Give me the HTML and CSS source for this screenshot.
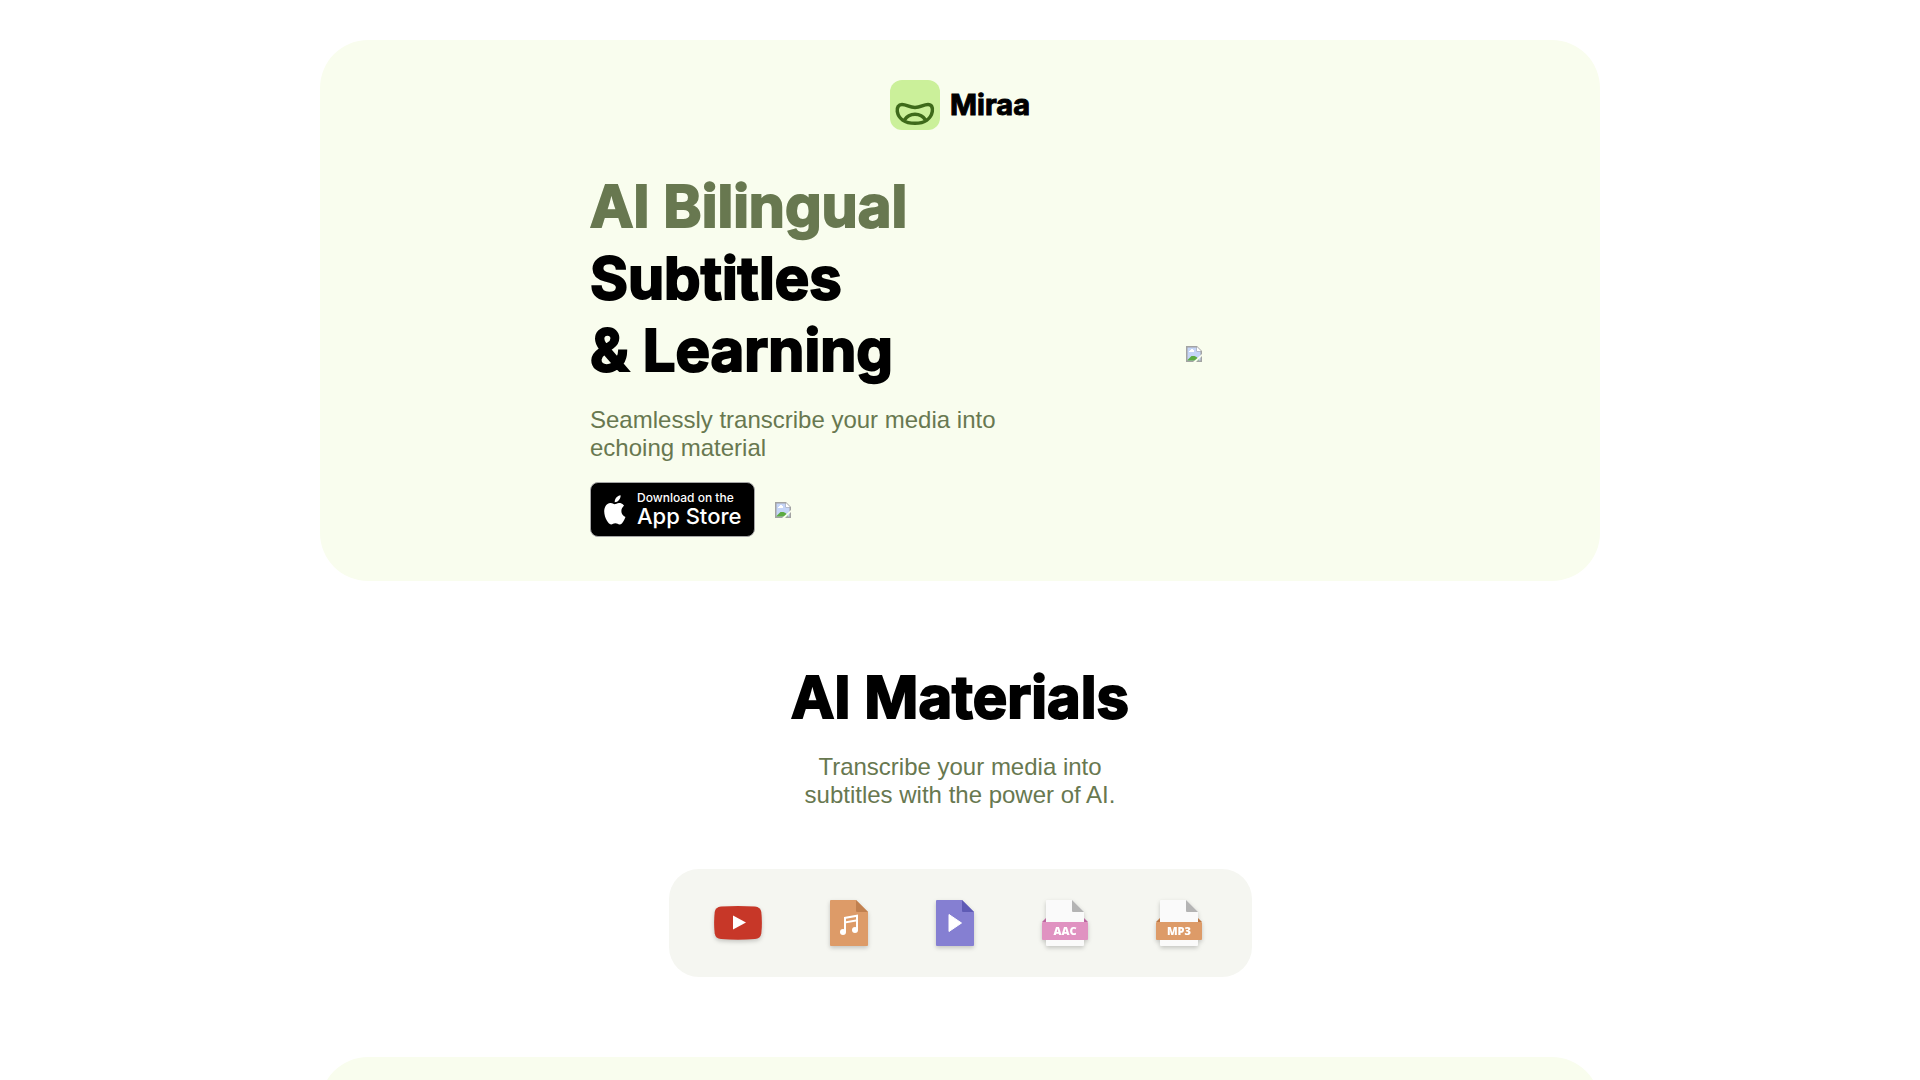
FILE: index.html
```html
<!DOCTYPE html>
<html lang="en">
<head>
<meta charset="utf-8">
<meta name="viewport" content="width=device-width, initial-scale=1">
<title>Miraa</title>
<link rel="stylesheet" href="styles.css">
</head>
<body>
<svg class="defs" aria-hidden="true">
  <symbol id="broken" viewBox="0 0 16 16">
    <path d="M0 0h11l5 5v11H0z" fill="#a3a3a3"/>
    <path d="M1.500 1.500h9v4h4v9h-13z" fill="#c5d5f7"/>
    <path d="M11 1v4h4z" fill="#fff"/>
    <path d="M3 6V5h1V4h1V3h2v1h1v2z" fill="#fff"/>
    <path d="M1.500 14.500V14l4-4h3l2 1 2 2v1.500z" fill="#5cab42"/>
    <path d="M16 8v2l-6 6H7z" fill="#f9fdee"/>
  </symbol>
</svg>
<main class="page">
  <section class="card">
    <header class="brand">
      <svg class="brand-icon" viewBox="0 0 50 50" aria-hidden="true">
        <rect width="50" height="50" rx="12" fill="#cbf09a"/>
        <g fill="none" stroke="#3e6a1a" stroke-width="3.500" stroke-linecap="round" stroke-linejoin="round">
          <path d="M12 24.500C17 24.500 19 27.500 25 27.500C31 27.500 33 24.500 38 24.500C41.500 24.500 43 27.500 42.300 31.500C41 38.500 35 43.300 25 43.300C14.500 43.300 8.500 38.500 7.300 31.500C6.700 27.500 8.500 24.500 12 24.500Z"/>
          <path d="M14.500 40C17 36 20.500 34.300 25 34.300C29.500 34.300 33 36 35.500 40"/>
        </g>
      </svg>
      <span class="brand-name">Miraa</span>
    </header>
    <div class="hero">
      <div>
        <h1 class="title"><span class="accent">AI Bilingual</span><br>Subtitles<br>&amp; Learning</h1>
        <p class="lead">Seamlessly transcribe your media into echoing material</p>
        <div class="actions">
          <a class="store" href="#">
            <svg class="apple" viewBox="1 0 23 30" aria-hidden="true"><path fill="#fff" d="M19.800 15.800c0-2.700 2.200-4 2.300-4.100-1.300-1.900-3.200-2.100-3.900-2.100-1.700-.2-3.200 1-4.100 1s-2.100-1-3.500-.9C8.800 9.700 7.100 10.700 6.200 12.300c-2 3.300-.5 8.300 1.400 11 .9 1.300 2 2.800 3.500 2.800 1.400-.1 1.900-.9 3.600-.9s2.200.9 3.600.9c1.500 0 2.500-1.300 3.400-2.700 1.100-1.500 1.500-3 1.500-3.100-.1 0-3.400-1.200-3.400-4.500z" transform="translate(-4.500 -4.500) scale(1.180 1.300)"/><path fill="#fff" d="M12.200 7.200C12 3.600 14.800.6 18.100.2c.3 3.600-2.700 7-5.900 7z"/></svg>
            <span class="store-text"><small class="store-small">Download on the</small><span class="store-name">App Store</span></span>
          </a>
          <svg class="broken" role="img"><use href="#broken"/></svg>
        </div>
      </div>
      <div class="visual"><svg class="broken" role="img"><use href="#broken"/></svg></div>
    </div>
  </section>

  <section class="materials">
    <h2 class="title">AI Materials</h2>
    <p class="lead">Transcribe your media into<br>subtitles with the power of AI.</p>
    <div class="formats">
      <svg class="icon wide" viewBox="0 0 48 46" aria-hidden="true">
        <path d="M7 6.500Q24 5.500 41 6.500Q46.500 7 47.300 12Q48.500 23 47.300 33.500Q46.500 38.500 41 39Q24 40.500 7 39Q1.500 38.500 .7 33.500Q-.5 23 .7 12Q1.500 7 7 6.500Z" fill="#c73728"/>
        <path d="M19 15.500v14l13-7z" fill="#fff"/>
      </svg>
      <svg class="icon" viewBox="0 0 38 46" aria-hidden="true">
        <path d="M1 0h25l12 12v33q0 1-1 1H1q-1 0-1-1V1q0-1 1-1z" fill="#dd9b68"/>
        <path d="M26 0l12 12H27q-1 0-1-1z" fill="#c1804f"/>
        <g fill="#fff"><circle cx="13" cy="32" r="3"/><circle cx="25" cy="30" r="3"/><path d="M14 17l14-2.500V30h-2v-8.500L16 23.300V32h-2z M16 18.800v2.500l10-1.800V17z" fill-rule="evenodd"/></g>
      </svg>
      <svg class="icon" viewBox="0 0 38 46" aria-hidden="true">
        <path d="M1 0h25l12 12v33q0 1-1 1H1q-1 0-1-1V1q0-1 1-1z" fill="#857fd2"/>
        <path d="M26 0l12 12H27q-1 0-1-1z" fill="#5f5bb5"/>
        <path d="M13 14.500l12.500 8.500L13 31.500z" fill="#fff" stroke="#fff" stroke-linejoin="round"/>
      </svg>
      <svg class="icon band" viewBox="0 0 46 46" aria-label="AAC">
        <path d="M4 18l-4 4h46l-4-4z" fill="#bd67a0"/>
        <path d="M5 0h25l12 12v33q0 1-1 1H5q-1 0-1-1V1q0-1 1-1z" fill="#fafafa"/>
        <path d="M30 0l12 12H31q-1 0-1-1z" fill="#b4b4b4"/>
        <rect y="22" width="46" height="18" rx="1" fill="#e092c1"/>
        <text class="tag" x="23" y="35">AAC</text>
      </svg>
      <svg class="icon band" viewBox="0 0 46 46" aria-label="MP3">
        <path d="M4 18l-4 4h46l-4-4z" fill="#bd7845"/>
        <path d="M5 0h25l12 12v33q0 1-1 1H5q-1 0-1-1V1q0-1 1-1z" fill="#fafafa"/>
        <path d="M30 0l12 12H31q-1 0-1-1z" fill="#b4b4b4"/>
        <rect y="22" width="46" height="18" rx="1" fill="#dd9b68"/>
        <text class="tag" x="23" y="35">MP3</text>
      </svg>
    </div>
  </section>

  <section class="card next"></section>
</main>
</body>
</html>
```

FILE: styles.css
```css
* { box-sizing: border-box; }

body {
  margin: 0;
  background: #fff;
  color: #000;
  font-family: "Liberation Sans", Arial, sans-serif;
}

.defs { display: none; }

.page {
  max-width: 1280px;
  margin: 0 auto;
  padding: 40px 0;
}

.card {
  border-radius: 48px;
  background: #f9fdee;
  padding: 40px 40px 44px;
}

.brand {
  display: flex;
  justify-content: center;
  align-items: center;
  gap: 10px;
}

.brand-icon { width: 50px; height: 50px; }

.brand-name {
  font: 700 29px/36px Inter, sans-serif;
  -webkit-text-stroke: 1px currentColor;
}

.hero {
  display: grid;
  grid-template-columns: 1fr 272px;
  align-items: center;
  max-width: 740px;
  margin: 40px auto 0;
}

/* The thin outline and the soft halo thicken the strokes and round their ends. */
.title {
  margin: 0;
  font: 700 58px/72px Inter, sans-serif;
  -webkit-text-stroke: 2px currentColor;
  text-shadow: 0 0 1px currentColor;
}

.accent { color: #687850; }

.lead {
  margin: 20px 0 0;
  max-width: 448px;
  font-size: 24px;
  line-height: 28px;
  color: #687850;
}

.actions {
  display: flex;
  align-items: center;
  gap: 20px;
  margin-top: 20px;
}

.store {
  display: flex;
  align-items: center;
  gap: 10px;
  width: 165px;
  height: 55px;
  padding: 0 12px;
  border: 1px solid #a6a6a6;
  border-radius: 8px;
  background: #000;
  color: #fff;
  font-family: Inter, sans-serif;
  text-decoration: none;
  white-space: nowrap;
}

.apple { flex: none; width: 24px; height: 30px; }

.store-text { display: flex; flex-direction: column; }

.store-small {
  font-size: 12px;
  line-height: 12px;
  font-weight: 500;
}

.store-name {
  font-size: 22px;
  line-height: 24px;
  font-weight: 500;
}

.broken { width: 16px; height: 16px; }

.visual { display: flex; justify-content: center; }

.materials {
  display: flex;
  flex-direction: column;
  align-items: center;
  padding: 80px 0;
  text-align: center;
}

.formats {
  display: flex;
  align-items: center;
  gap: 68px;
  margin-top: 60px;
  padding: 31px 50px 31px 45px;
  border-radius: 30px;
  background: #f5f6f1;
}

.icon {
  width: 38px;
  height: 46px;
  overflow: visible;
  filter: drop-shadow(0 2px 2px rgba(0, 0, 0, 0.2));
}

.icon.wide { width: 48px; }
.icon.band { width: 46px; }

.tag {
  fill: #fff;
  font: 800 11px "Open Sans", sans-serif;
  text-anchor: middle;
}

.next { min-height: 540px; }
```
